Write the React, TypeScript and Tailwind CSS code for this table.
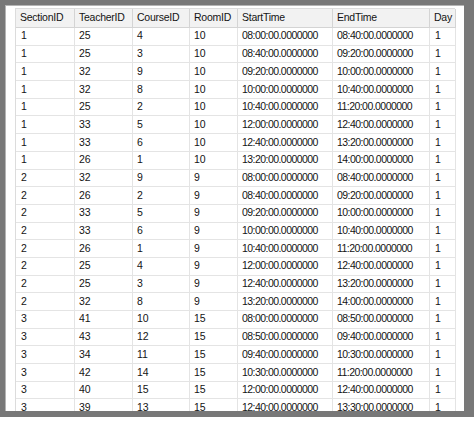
import React from "react";

const columns = [
  { key: "section", label: "SectionID", width: "w-[59px]" },
  { key: "teacher", label: "TeacherID", width: "w-[58px]" },
  { key: "course", label: "CourseID", width: "w-[57px]" },
  { key: "room", label: "RoomID", width: "w-[48px]" },
  { key: "start", label: "StartTime", width: "w-[95px]" },
  { key: "end", label: "EndTime", width: "w-[97px]" },
  { key: "day", label: "Day", width: "w-[26px]" },
];

const rows: string[][] = [
  ["1", "25", "4", "10", "08:00", "08:40"],
  ["1", "25", "3", "10", "08:40", "09:20"],
  ["1", "32", "9", "10", "09:20", "10:00"],
  ["1", "32", "8", "10", "10:00", "10:40"],
  ["1", "25", "2", "10", "10:40", "11:20"],
  ["1", "33", "5", "10", "12:00", "12:40"],
  ["1", "33", "6", "10", "12:40", "13:20"],
  ["1", "26", "1", "10", "13:20", "14:00"],
  ["2", "32", "9", "9", "08:00", "08:40"],
  ["2", "26", "2", "9", "08:40", "09:20"],
  ["2", "33", "5", "9", "09:20", "10:00"],
  ["2", "33", "6", "9", "10:00", "10:40"],
  ["2", "26", "1", "9", "10:40", "11:20"],
  ["2", "25", "4", "9", "12:00", "12:40"],
  ["2", "25", "3", "9", "12:40", "13:20"],
  ["2", "32", "8", "9", "13:20", "14:00"],
  ["3", "41", "10", "15", "08:00", "08:50"],
  ["3", "43", "12", "15", "08:50", "09:40"],
  ["3", "34", "11", "15", "09:40", "10:30"],
  ["3", "42", "14", "15", "10:30", "11:20"],
  ["3", "40", "15", "15", "12:00", "12:40"],
  ["3", "39", "13", "15", "12:40", "13:30"],
];

const time = (hm: string) => `${hm}:00.0000000`;

export default function App() {
  return (
    <div className="h-[422px] w-[474px] overflow-hidden bg-white font-['Liberation_Sans',Arial,sans-serif] text-[10.5px] text-[#141414]">
      <div className="h-[417px] w-[474px] bg-[#787878] pb-[6px] pl-[5px] pr-[10px] pt-[5px]">
        <div className="h-full w-full overflow-hidden border-l border-t border-[#b4b4b4] bg-white pl-[9px] pt-[2px]">
          <div className="w-[440px] border-l border-t border-[#dcdcdc]">
            <div className="flex h-[19px] bg-[#f2f2f2]">
              {columns.map((c) => (
                <div
                  key={c.key}
                  className={`${c.width} flex shrink-0 items-center border-b border-r border-[#d4d4d4] pl-[4px] tracking-[-0.25px]`}
                >
                  {c.label}
                </div>
              ))}
            </div>
            {rows.map((r, i) => (
              <div key={i} className="flex h-[17.7px]">
                <div className="flex w-[59px] shrink-0 items-center border-b border-r border-[#e4e4e4] pl-[5px]">
                  {r[0]}
                </div>
                <div className="flex w-[58px] shrink-0 items-center border-b border-r border-[#e4e4e4] pl-[4px]">
                  {r[1]}
                </div>
                <div className="flex w-[57px] shrink-0 items-center border-b border-r border-[#e4e4e4] pl-[4px]">
                  {r[2]}
                </div>
                <div className="flex w-[48px] shrink-0 items-center border-b border-r border-[#e4e4e4] pl-[4px]">
                  {r[3]}
                </div>
                <div className="flex w-[95px] shrink-0 items-center border-b border-r border-[#e4e4e4] pl-[4px] tracking-[-0.55px]">
                  {time(r[4])}
                </div>
                <div className="flex w-[97px] shrink-0 items-center border-b border-r border-[#e4e4e4] pl-[4px] tracking-[-0.55px]">
                  {time(r[5])}
                </div>
                <div className="flex w-[26px] shrink-0 items-center border-b border-r border-[#e4e4e4] pl-[5px]">
                  1
                </div>
              </div>
            ))}
          </div>
        </div>
      </div>
    </div>
  );
}
